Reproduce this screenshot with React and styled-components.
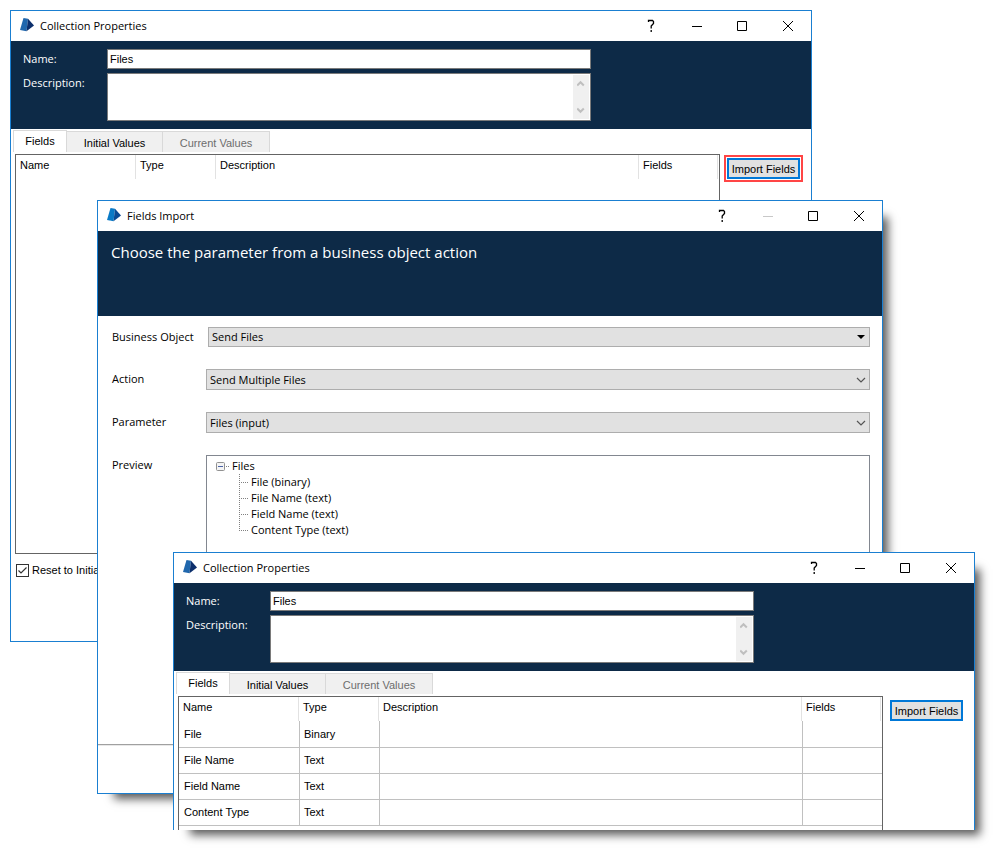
import React, { useId } from "react";
import styled, { createGlobalStyle, css } from "styled-components";

const navy = "#0d2a47";
const accent = "#1a7fd1";
const segoe = `"Open Sans", "Noto Sans", sans-serif`;
const sans = `"Liberation Sans", Arial, sans-serif`;

const GlobalStyle = createGlobalStyle`
  *, *::before, *::after { box-sizing: border-box; }
  body { margin: 0; background: #fff; color: #000; font: 11px/16px ${sans}; }
  button, input, select, textarea { font: inherit; color: inherit; margin: 0; border-radius: 0; }
`;

const Desktop = styled.main`
  display: grid;
  align-items: start;
  min-height: 100vh;
`;

const WindowFrame = styled.section`
  grid-area: 1 / 1;
  min-width: 620px;
  margin: ${(p) => p.$place};
  background: #fff;
  border: 1px solid ${accent};
  ${(p) => p.$cut && css`border-bottom: 0;`}
  ${(p) => p.$raised && css`box-shadow: 11px 11px 9px -6px rgba(0, 0, 0, 0.65);`}
`;

const TitleBar = styled.header`
  display: flex;
  align-items: center;
  height: 30px;
  padding-left: 8px;
`;

const Title = styled.h1`
  flex: 1;
  margin: 0 0 0 5px;
  font: 400 11px/16px ${segoe};
`;

const CaptionButton = styled.button`
  display: grid;
  place-items: center;
  width: 46px;
  height: 30px;
  padding: 0;
  border: 0;
  background: none;
  color: ${(p) => (p.disabled ? "#c8c8c8" : "#000")};
`;

const Banner = styled.div`
  background: ${navy};
  color: #fff;
`;

const PropertyBanner = styled(Banner)`
  display: grid;
  grid-template-columns: 84px minmax(0, 484px);
  row-gap: 4px;
  padding: 8px 12px;
  font-family: ${segoe};
`;

const PropertyLabel = styled.label`
  padding-top: 2px;
`;

const NameInput = styled.input`
  width: 100%;
  height: 20px;
  padding: 0 2px;
  border: 1px solid #7a7a7a;
  background: #fff;
  color: #000;
  font-family: ${sans};
`;

const DescriptionBox = styled.div`
  display: flex;
  height: 48px;
  padding: 1px;
  border: 1px solid #7a7a7a;
  background: #fff;
`;

const DescriptionInput = styled.textarea`
  flex: 1;
  min-width: 0;
  padding: 1px;
  border: 0;
  resize: none;
  overflow: hidden;
  background: none;
  color: #000;
`;

const ScrollTrack = styled.div`
  display: flex;
  flex-direction: column;
  justify-content: space-between;
  align-items: center;
  width: 16px;
  padding: 5px 0;
  background: #f0f0f0;
`;

const TabStrip = styled.div`
  display: flex;
  align-items: flex-end;
  height: 24px;
  padding: 0 2px 1px;
`;

const Tab = styled.button`
  width: ${(p) => p.$width}px;
  height: ${(p) => (p.$active ? 22 : 21)}px;
  padding: ${(p) => (p.$active ? "0 0 2px" : "1px 0 0")};
  border: 1px solid #d9d9d9;
  border-bottom: 0;
  ${(p) => !p.$active && css`border-left: 0;`}
  background: ${(p) => (p.$active ? "#fff" : "#f0f0f0")};
  color: ${(p) => (p.disabled ? "#6d6d6d" : "#000")};
`;

const Body = styled.div`
  display: flex;
  align-items: flex-start;
  gap: 7px;
  padding: 1px 11px 0 4px;
`;

const GridBox = styled.div`
  flex: 1;
  min-width: 0;
  min-height: ${(p) => (p.$tall ? 400 : 134)}px;
  border: 1px solid #646464;
  ${(p) => !p.$tall && css`border-bottom: 0;`}
`;

const FieldTable = styled.table`
  width: 100%;
  table-layout: fixed;
  border-collapse: separate;
  border-spacing: 0;
  text-align: left;
`;

const HeadCell = styled.th`
  width: ${(p) => p.$width || "auto"};
  height: 24px;
  padding: 0 4px 4px;
  font-weight: 400;
  background: linear-gradient(#e2e2e2, #e2e2e2) no-repeat right 1px top 0 / 1px 100%;
  & + & { padding-left: 3px; }
`;

const Cell = styled.td`
  height: 26px;
  padding: 0 5px;
  border: solid #c0c0c0;
  border-width: 0 1px 1px 0;
  & + & { padding-left: 4px; }
  &:last-child { border-right: 0; }
  tr:first-child > & { height: 27px; }
  tr + tr > & { padding-bottom: 2px; }
`;

const ImportButton = styled.button`
  width: 73px;
  height: 21px;
  margin-top: 4px;
  padding: 0;
  border: 2px solid #0078d7;
  background: #e1e1e1;
  white-space: nowrap;
  ${(p) => p.$highlight && css`
    outline: 2px solid #ff4545;
    outline-offset: 1px;
  `}
`;

const OptionBar = styled.div`
  height: 87px;
  padding: 8px 5px;
`;

const CheckLabel = styled.label`
  display: flex;
  align-items: center;
  gap: 3px;
`;

const CheckHolder = styled.span`
  display: grid;
  > * { grid-area: 1 / 1; }
  > svg { pointer-events: none; visibility: hidden; }
  > input:checked + svg { visibility: visible; }
`;

const CheckBox = styled.input`
  appearance: none;
  width: 13px;
  height: 13px;
  border: 1px solid #333;
  background: #fff;
`;

const ImportBanner = styled(Banner)`
  height: 85px;
  padding: 9px 13px;
`;

const Heading = styled.h2`
  margin: 0;
  font: 400 15px/24px ${segoe};
`;

const Form = styled.form`
  display: grid;
  grid-template-columns: 94px minmax(0, 1fr);
  row-gap: 22px;
  padding: 11px 12px 14px 14px;
  font-family: ${segoe};
`;

const FormLabel = styled.label`
  padding-top: 2px;
`;

const SelectHolder = styled.div`
  display: grid;
  grid-template-columns: minmax(0, 1fr) 18px;
  align-items: center;
  height: ${(p) => (p.$compact ? 20 : 21)}px;
  margin-left: ${(p) => (p.$compact ? 2 : 0)}px;
  > svg { grid-area: 1 / 2; justify-self: center; pointer-events: none; }
`;

const Select = styled.select`
  grid-area: 1 / 1 / 2 / 3;
  appearance: none;
  width: 100%;
  height: 100%;
  padding: 0 20px 0 3px;
  border: 1px solid #adadad;
  background: #e1e1e1;
`;

const Preview = styled.div`
  height: 275px;
  padding: 2px 9px;
  border: 1px solid #828790;
`;

const TreeRoot = styled.div`
  display: flex;
  align-items: center;
  height: 16px;
`;

const Expander = styled.button`
  display: grid;
  width: 9px;
  height: 9px;
  padding: 0;
  border: 0;
  background: none;
`;

const Stub = styled.span`
  width: 3px;
  margin: 0 3px 0 1px;
  border-top: 1px dotted #808080;
`;

const Leaves = styled.ul`
  margin: 0 0 0 23px;
  padding: 0;
  list-style: none;
`;

const Leaf = styled.li`
  display: flex;
  height: 16px;
  &::before {
    content: "";
    width: 9px;
    height: 16px;
    margin-right: 3px;
    background:
      repeating-linear-gradient(90deg, #808080 0 1px, transparent 1px 2px) no-repeat 0 8px / 100% 1px,
      repeating-linear-gradient(180deg, #808080 0 1px, transparent 1px 2px) no-repeat 0 0 / 1px 100%;
  }
  &:last-child::before {
    height: 9px;
  }
`;

const DialogFooter = styled.footer`
  height: 49px;
  border-top: 1px solid #a0a0a0;
  box-shadow: inset 0 1px #e8e8e8;
`;

function PrismLogo({ bright }) {
  return (
    <svg width="16" height="16" viewBox="0 0 16 16" aria-hidden="true">
      <path d="M4.5 0 9 .7 7.5 13.2 1 12Z" fill={bright ? "#0a7ac6" : "#2067ad"} />
      <path d="M9 .7 15 7.5 7.5 13.2Z" fill={bright ? "#0a4a94" : "#0c2f6c"} />
    </svg>
  );
}

const captionShapes = {
  Minimize: <path d="M1 6.5H11" />,
  Maximize: <path d="M.5 1.5H9.5V10.5H.5Z" />,
  Close: <path d="M0 1 10 11M10 1 0 11" />,
};

function Caption({ title, bright, minimizable = true }) {
  return (
    <TitleBar>
      <PrismLogo bright={bright} />
      <Title>{title}</Title>
      <CaptionButton type="button" aria-label="Help">
        <svg width="10" height="14" viewBox="0 0 10 14" fill="none" stroke="currentColor" strokeWidth="1.3">
          <path d="M3.5 3V1.5H7.5L8.5 2.5V4.5L6.2 7V9.5M6.2 11V13" />
        </svg>
      </CaptionButton>
      {Object.entries(captionShapes).map(([name, shape]) => (
        <CaptionButton
          key={name}
          type="button"
          aria-label={name}
          disabled={name === "Minimize" && !minimizable}
        >
          <svg width="10" height="12" viewBox="0 0 10 12" overflow="visible" fill="none" stroke="currentColor">{shape}</svg>
        </CaptionButton>
      ))}
    </TitleBar>
  );
}

function ScrollArrow({ down }) {
  return (
    <svg width="8" height="7" viewBox="0 0 8 7" fill="none" stroke="#bfbfbf" strokeWidth="2" aria-hidden="true">
      <path d={down ? "M.2 1.5 3.5 4.8 6.8 1.5" : "M.2 5.5 3.5 2.2 6.8 5.5"} />
    </svg>
  );
}

function CollectionProperties({ place, rows = [], first }) {
  const id = useId();
  return (
    <WindowFrame $place={place} $cut={!first} $raised={!first}>
      <Caption title="Collection Properties" />
      <PropertyBanner>
        <PropertyLabel htmlFor={id + "n"}>Name:</PropertyLabel>
        <NameInput id={id + "n"} defaultValue="Files" />
        <PropertyLabel htmlFor={id + "d"}>Description:</PropertyLabel>
        <DescriptionBox>
          <DescriptionInput id={id + "d"} />
          <ScrollTrack>
            <ScrollArrow />
            <ScrollArrow down />
          </ScrollTrack>
        </DescriptionBox>
      </PropertyBanner>
      <TabStrip role="tablist">
        <Tab type="button" role="tab" aria-selected="true" $width={54} $active>Fields</Tab>
        <Tab type="button" role="tab" aria-selected="false" $width={96}>Initial Values</Tab>
        <Tab type="button" role="tab" aria-selected="false" $width={107} disabled>Current Values</Tab>
      </TabStrip>
      <Body>
        <GridBox $tall={first}>
          <FieldTable>
            <thead>
              <tr>
                <HeadCell $width="121px">Name</HeadCell>
                <HeadCell $width="80px">Type</HeadCell>
                <HeadCell>Description</HeadCell>
                <HeadCell $width="79px">Fields</HeadCell>
              </tr>
            </thead>
            <tbody>
              {rows.map(([name, type]) => (
                <tr key={name}>
                  <Cell>{name}</Cell>
                  <Cell>{type}</Cell>
                  <Cell />
                  <Cell />
                </tr>
              ))}
            </tbody>
          </FieldTable>
        </GridBox>
        <ImportButton type="button" $highlight={first}>Import Fields</ImportButton>
      </Body>
      {first && (
        <OptionBar>
          <CheckLabel>
            <CheckHolder>
              <CheckBox type="checkbox" defaultChecked />
              <svg width="13" height="13" viewBox="0 0 13 13" fill="none" stroke="#333" strokeWidth="1.2" aria-hidden="true">
                <path d="M2.5 6.5 5 9 10.5 3.5" />
              </svg>
            </CheckHolder>
            Reset to Initial
          </CheckLabel>
        </OptionBar>
      )}
    </WindowFrame>
  );
}

function SelectField({ label, value, compact }) {
  const id = useId();
  return (
    <>
      <FormLabel htmlFor={id}>{label}</FormLabel>
      <SelectHolder $compact={compact}>
        <Select id={id} defaultValue={value}>
          <option>{value}</option>
        </Select>
        <svg width="10" height="6" viewBox="0 0 10 6" aria-hidden="true">
          {compact ? (
            <path d="M1 1H9L5 5Z" fill="#000" />
          ) : (
            <path d="M1 1 5 5 9 1" fill="none" stroke="#555" strokeWidth="1.2" />
          )}
        </svg>
      </SelectHolder>
    </>
  );
}

function FieldsImport() {
  const leaves = ["File (binary)", "File Name (text)", "Field Name (text)", "Content Type (text)"];
  return (
    <WindowFrame $place="200px 117px 0 97px" $raised>
      <Caption title="Fields Import" bright minimizable={false} />
      <ImportBanner>
        <Heading>Choose the parameter from a business object action</Heading>
      </ImportBanner>
      <Form>
        <SelectField label="Business Object" value="Send Files" compact />
        <SelectField label="Action" value="Send Multiple Files" />
        <SelectField label="Parameter" value="Files (input)" />
        <FormLabel as="span">Preview</FormLabel>
        <Preview>
          <TreeRoot>
            <Expander type="button" aria-label="Collapse Files">
              <svg width="9" height="9" viewBox="0 0 9 9" fill="none">
                <rect x=".5" y=".5" width="8" height="8" rx="1" fill="#f4f4f4" stroke="#919191" />
                <path d="M2 4.5H7" stroke="#4b63a7" />
              </svg>
            </Expander>
            <Stub />
            Files
          </TreeRoot>
          <Leaves>
            {leaves.map((leaf) => <Leaf key={leaf}>{leaf}</Leaf>)}
          </Leaves>
        </Preview>
      </Form>
      <DialogFooter />
    </WindowFrame>
  );
}

const fieldRows = [
  ["File", "Binary"],
  ["File Name", "Text"],
  ["Field Name", "Text"],
  ["Content Type", "Text"],
];

export default function App() {
  return (
    <>
      <GlobalStyle />
      <Desktop>
        <CollectionProperties place="10px 188px 0 10px" first />
        <FieldsImport />
        <CollectionProperties place="552px 25px 0 173px" rows={fieldRows} />
      </Desktop>
    </>
  );
}
